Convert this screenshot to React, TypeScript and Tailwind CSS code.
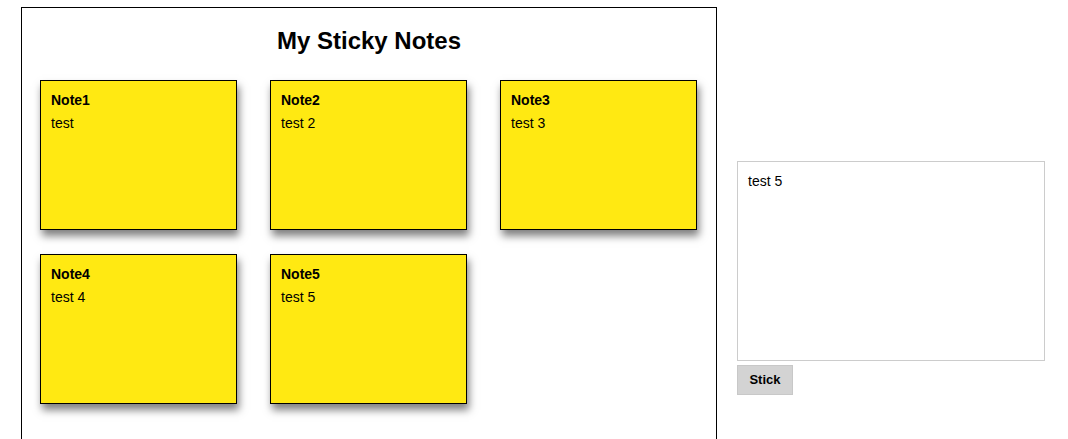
import React from "react";

const notes = [
  { title: "Note1", body: "test" },
  { title: "Note2", body: "test 2" },
  { title: "Note3", body: "test 3" },
  { title: "Note4", body: "test 4" },
  { title: "Note5", body: "test 5" },
];

export default function App() {
  return (
    <div className="flex items-start bg-white min-h-[439px] overflow-hidden text-black" style={{ fontFamily: '"Liberation Sans", Arial, sans-serif' }}>
      <div className="ml-[21px] mt-[7px] w-[696px] h-[460px] border border-black shrink-0">
        <h1 className="text-center text-[24px] font-bold leading-[28px] mt-[19px]">My Sticky Notes</h1>
        <div className="grid grid-cols-[197px_197px_197px] gap-x-[33px] gap-y-[24px] ml-[18px] mt-[25px]">
          {notes.map((n) => (
            <div
              key={n.title}
              className="h-[150px] bg-[#ffe912] border border-black px-[10px] pt-[10px] shadow-[2px_6px_8px_rgba(0,0,0,0.5)]"
            >
              <div className="text-[14px] font-bold leading-[18px]">{n.title}</div>
              <div className="text-[14px] leading-[18px] mt-[5px]">{n.body}</div>
            </div>
          ))}
        </div>
      </div>
      <div className="ml-[20px] mt-[161px] flex flex-col items-start">
        <textarea
          defaultValue="test 5"
          className="w-[308px] h-[200px] border border-[#cccccc] p-[10px] text-[14px] leading-[18px] resize-none outline-none block"
          style={{ fontFamily: '"Liberation Sans", Arial, sans-serif' }}
        />
        <button
          className="mt-[4px] w-[56px] h-[30px] bg-[#d3d3d3] border border-[#c8c8c8] text-[13px] font-bold"
          style={{ fontFamily: '"Liberation Sans", Arial, sans-serif' }}
        >
          Stick
        </button>
      </div>
    </div>
  );
}
